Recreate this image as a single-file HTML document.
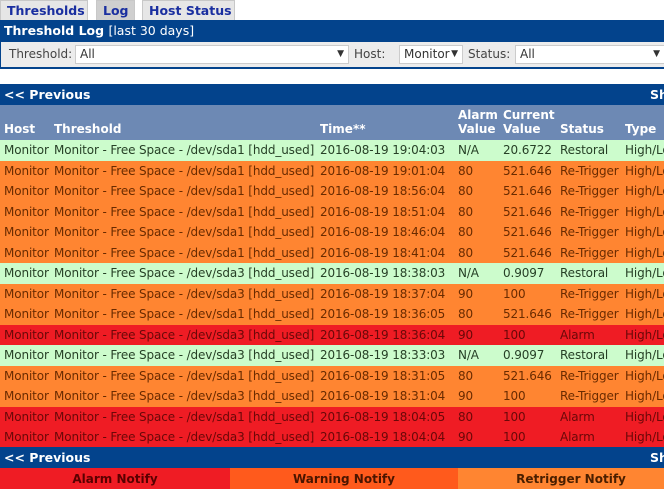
<!DOCTYPE html>
<html><head><style>
*{margin:0;padding:0;box-sizing:border-box}
body{width:664px;height:489px;overflow:hidden;background:#fff;font-family:"DejaVu Sans",Verdana,sans-serif;font-size:12px;position:relative}
.abs{position:absolute}
.tab{position:absolute;top:0;height:20px;background:#e6e6e6;border:1px solid #c8c8c8;border-bottom:none;color:#1a2fa0;font-weight:bold;font-size:12.5px;line-height:19px;padding-left:6px}
.bar{position:absolute;left:0;width:664px;background:#03438c;color:#fff;font-weight:bold;font-size:12.5px}
.filt{position:absolute;left:0;top:42px;width:664px;height:27px;background:#ececec;border-left:1px solid #03438c;border-bottom:2px solid #03438c;color:#444}
.sel{position:absolute;top:3px;height:19px;background:#fff;border:1px solid #ccc;color:#333;line-height:17px;padding-left:4px}
.sel span{position:absolute;right:4px;top:0;font-size:9px}
table{position:absolute;left:0;top:105px;width:700px;border-collapse:collapse;table-layout:fixed}
th{background:#6d89b4;color:#fff;text-align:left;font-size:12px;line-height:14px;vertical-align:bottom;padding:0 0 4px 4px;height:35px;white-space:nowrap}
td{height:20.5px;padding:0 0 0 4px;white-space:nowrap;overflow:hidden;line-height:20px;letter-spacing:-0.12px}
tr.g td{background:#ccfccc;color:#264026}
tr.o td{background:#ff8531;color:#6a2b00}
tr.r td{background:#ef1c24;color:#6a0808}
</style></head><body>
<div class="tab" style="left:0;width:88px;">Thresholds</div>
<div class="tab" style="left:96px;width:39px;background:#cfcfcf">Log</div>
<div class="tab" style="left:142px;width:93px;">Host Status</div>
<div class="bar" style="top:20px;height:22px;line-height:22px;padding-left:4px">Threshold Log <span style="font-weight:normal">[last 30 days]</span></div>
<div class="filt">
<div class="abs" style="left:8px;top:5px">Threshold:</div>
<div class="sel" style="left:74px;width:274px">All<span>▼</span></div>
<div class="abs" style="left:353px;top:5px">Host:</div>
<div class="sel" style="left:398px;width:64px">Monitor<span>▼</span></div>
<div class="abs" style="left:467px;top:5px">Status:</div>
<div class="sel" style="left:514px;width:160px">All<span style="right:14px">▼</span></div>
</div>
<div class="bar" style="top:84px;height:21px;line-height:21px;padding-left:4px">&lt;&lt; Previous<span style="position:absolute;left:650px">Sh</span></div>
<table>
<colgroup><col style="width:50px"><col style="width:266px"><col style="width:138px"><col style="width:45px"><col style="width:57px"><col style="width:65px"><col style="width:79px"></colgroup>
<tr><th>Host</th><th>Threshold</th><th>Time**</th><th>Alarm<br>Value</th><th>Current<br>Value</th><th>Status</th><th>Type</th></tr>
<tr class="g"><td>Monitor</td><td>Monitor - Free Space - /dev/sda1 [hdd_used]</td><td>2016-08-19 19:04:03</td><td>N/A</td><td>20.6722</td><td>Restoral</td><td>High/Low</td></tr>
<tr class="o"><td>Monitor</td><td>Monitor - Free Space - /dev/sda1 [hdd_used]</td><td>2016-08-19 19:01:04</td><td>80</td><td>521.646</td><td>Re-Trigger</td><td>High/Low</td></tr>
<tr class="o"><td>Monitor</td><td>Monitor - Free Space - /dev/sda1 [hdd_used]</td><td>2016-08-19 18:56:04</td><td>80</td><td>521.646</td><td>Re-Trigger</td><td>High/Low</td></tr>
<tr class="o"><td>Monitor</td><td>Monitor - Free Space - /dev/sda1 [hdd_used]</td><td>2016-08-19 18:51:04</td><td>80</td><td>521.646</td><td>Re-Trigger</td><td>High/Low</td></tr>
<tr class="o"><td>Monitor</td><td>Monitor - Free Space - /dev/sda1 [hdd_used]</td><td>2016-08-19 18:46:04</td><td>80</td><td>521.646</td><td>Re-Trigger</td><td>High/Low</td></tr>
<tr class="o"><td>Monitor</td><td>Monitor - Free Space - /dev/sda1 [hdd_used]</td><td>2016-08-19 18:41:04</td><td>80</td><td>521.646</td><td>Re-Trigger</td><td>High/Low</td></tr>
<tr class="g"><td>Monitor</td><td>Monitor - Free Space - /dev/sda3 [hdd_used]</td><td>2016-08-19 18:38:03</td><td>N/A</td><td>0.9097</td><td>Restoral</td><td>High/Low</td></tr>
<tr class="o"><td>Monitor</td><td>Monitor - Free Space - /dev/sda3 [hdd_used]</td><td>2016-08-19 18:37:04</td><td>90</td><td>100</td><td>Re-Trigger</td><td>High/Low</td></tr>
<tr class="o"><td>Monitor</td><td>Monitor - Free Space - /dev/sda1 [hdd_used]</td><td>2016-08-19 18:36:05</td><td>80</td><td>521.646</td><td>Re-Trigger</td><td>High/Low</td></tr>
<tr class="r"><td>Monitor</td><td>Monitor - Free Space - /dev/sda3 [hdd_used]</td><td>2016-08-19 18:36:04</td><td>90</td><td>100</td><td>Alarm</td><td>High/Low</td></tr>
<tr class="g"><td>Monitor</td><td>Monitor - Free Space - /dev/sda3 [hdd_used]</td><td>2016-08-19 18:33:03</td><td>N/A</td><td>0.9097</td><td>Restoral</td><td>High/Low</td></tr>
<tr class="o"><td>Monitor</td><td>Monitor - Free Space - /dev/sda1 [hdd_used]</td><td>2016-08-19 18:31:05</td><td>80</td><td>521.646</td><td>Re-Trigger</td><td>High/Low</td></tr>
<tr class="o"><td>Monitor</td><td>Monitor - Free Space - /dev/sda3 [hdd_used]</td><td>2016-08-19 18:31:04</td><td>90</td><td>100</td><td>Re-Trigger</td><td>High/Low</td></tr>
<tr class="r"><td>Monitor</td><td>Monitor - Free Space - /dev/sda1 [hdd_used]</td><td>2016-08-19 18:04:05</td><td>80</td><td>100</td><td>Alarm</td><td>High/Low</td></tr>
<tr class="r"><td>Monitor</td><td>Monitor - Free Space - /dev/sda3 [hdd_used]</td><td>2016-08-19 18:04:04</td><td>90</td><td>100</td><td>Alarm</td><td>High/Low</td></tr>
</table>
<div class="bar" style="top:447px;height:21px;line-height:21px;padding-left:4px">&lt;&lt; Previous<span style="position:absolute;left:650px">Sh</span></div>
<div class="abs" style="left:0;top:468px;width:230px;height:21px;background:#ef1c24;color:#5a0000;font-weight:bold;text-align:center;line-height:22px">Alarm Notify</div>
<div class="abs" style="left:230px;top:468px;width:228px;height:21px;background:#ff5a1c;color:#4a1500;font-weight:bold;text-align:center;line-height:22px">Warning Notify</div>
<div class="abs" style="left:458px;top:468px;width:206px;height:21px;background:#ff8531;color:#4a1f00;font-weight:bold;text-align:center;line-height:22px;padding-left:20px">Retrigger Notify</div>
</body></html>
